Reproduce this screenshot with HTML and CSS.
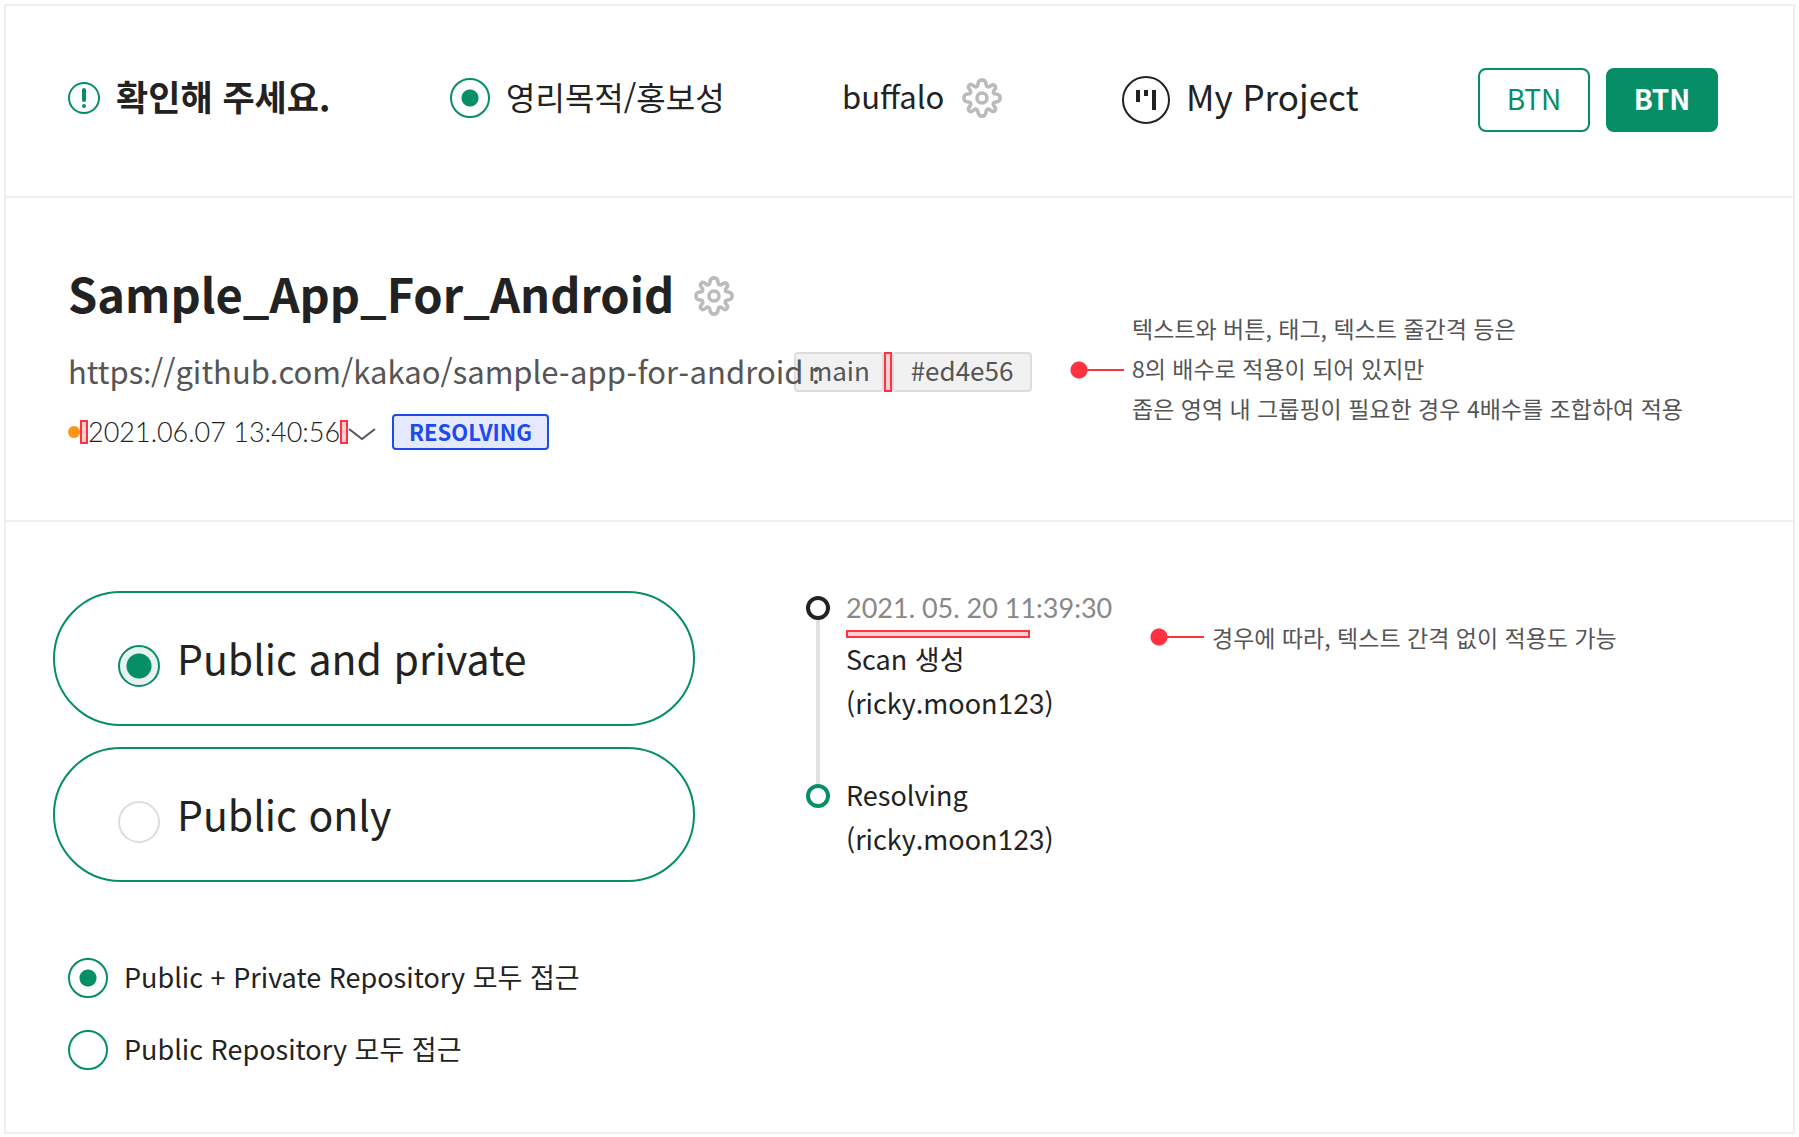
FILE: index.html
```html
<!DOCTYPE html>
<html lang="ko">
<head>
<meta charset="utf-8">
<meta name="viewport" content="width=device-width, initial-scale=1">
<title>Spacing guide</title>
<link rel="stylesheet" href="styles.css">
</head>
<body>
<svg class="defs" aria-hidden="true">
  <symbol id="gear" viewBox="0 0 40 40">
    <path d="M16 6 C16 0.500 24 0.500 24 6 C24.200 9 26 9.600 28 8.200 C32 5 35.500 8.500 32 12.500 C30.500 14 31 16 34 16 C39.500 16 39.500 24 34 24 C31 24 30.500 26 32 28 C35.500 32 32 35.500 28 32 C26 30.500 24.200 31 24 34 C24 39.500 16 39.500 16 34 C15.800 31 14 30.500 12 32 C8 35.500 4.500 32 8 28 C9.500 26 9 24 6 24 C0.500 24 0.500 16 6 16 C9 16 9.500 14 8 12 C4.500 8 8 4.500 12 8 C14 9.500 15.800 9 16 6 Z" fill="none" stroke="#bbb" stroke-width="3.600"/>
    <circle cx="20" cy="20" r="5" fill="none" stroke="#bbb" stroke-width="3.600"/>
  </symbol>
</svg>
<main class="frame">
  <header class="samples">
    <div class="sample">
      <svg class="icon-notice" viewBox="0 0 32 32" aria-hidden="true"><circle cx="16" cy="16" r="15" fill="none" stroke="#068e66" stroke-width="2"/><path d="M16 8V18" stroke="#068e66" stroke-width="4" stroke-linecap="round"/><circle cx="16" cy="24" r="2" fill="#068e66"/></svg>
      <strong class="sample-text notice">확인해 주세요.</strong>
    </div>
    <label class="sample"><input class="radio" type="radio" name="purpose" checked><span class="sample-text">영리목적/홍보성</span></label>
    <div class="sample sample-user"><span class="sample-text user">buffalo</span><svg class="gear"><use href="#gear"/></svg></div>
    <div class="sample sample-project">
      <svg class="icon-project" viewBox="0 0 48 48" aria-hidden="true"><circle cx="24" cy="24" r="23" fill="none" stroke="#222" stroke-width="2"/><path d="M16 14V26M24 14V20M32 14V34" stroke="#222" stroke-width="4"/></svg>
      <span class="project">My Project</span>
    </div>
    <div class="buttons"><button class="btn" type="button">BTN</button><button class="btn btn-primary" type="button">BTN</button></div>
  </header>

  <section class="detail">
    <div class="repo">
      <div class="title-row"><h1 class="title">Sample_App_For_Android</h1><svg class="gear"><use href="#gear"/></svg></div>
      <div class="url-row">
        <a class="url" href="https://github.com/kakao/sample-app-for-android">https<span class="latin">:</span>//github.com/kakao/sample<span class="latin">-</span>app<span class="latin">-</span>for<span class="latin">-</span>android <span class="latin">:</span></a>
        <span class="tag">main</span><i class="gap gap-tall"></i><span class="tag tag-wide">#ed4e56</span>
      </div>
      <div class="scan-row">
        <i class="status-dot"></i><i class="gap"></i><time class="date">2021.06.07 13:40:56</time><i class="gap"></i>
        <svg class="chevron" viewBox="0 0 28 24" aria-hidden="true"><path d="M1 9L14 19L27 9" fill="none" stroke="#555" stroke-width="2"/></svg>
        <span class="badge">RESOLVING</span>
      </div>
    </div>
    <div class="note note-first"><i class="pin"></i><p class="note-text">텍스트와 버튼, 태그, 텍스트 줄간격 등은<br>8의 배수로 적용이 되어 있지만<br>좁은 영역 내 그룹핑이 필요한 경우 4배수를 조합하여 적용</p></div>
  </section>

  <section class="access">
    <div class="choices">
      <label class="pill"><input class="pill-radio" type="radio" name="scope" checked><span class="pill-text">Public and private</span></label>
      <label class="pill"><input class="pill-radio" type="radio" name="scope"><span class="pill-text">Public only</span></label>
      <label class="option option-first"><input class="radio" type="radio" name="repo" checked><span class="option-text">Public + Private Repository 모두 접근</span></label>
      <label class="option"><input class="radio" type="radio" name="repo"><span class="option-text">Public Repository 모두 접근</span></label>
    </div>
    <ol class="timeline">
      <li class="event event-linked"><i class="node"></i><div><time class="event-date">2021. 05. 20 11:39:30</time><i class="gap gap-wide"></i><p class="event-text event-first">Scan 생성<br>(ricky.moon<span class="latin">123</span>)</p></div></li>
      <li class="event"><i class="node node-green"></i><p class="event-text event-last">Resolving<br>(ricky.moon<span class="latin">123</span>)</p></li>
    </ol>
    <div class="note note-second"><i class="pin"></i><p class="note-text">경우에 따라, 텍스트 간격 없이 적용도 가능</p></div>
  </section>
</main>
</body>
</html>
```
FILE: styles.css
```css
* { box-sizing: border-box; }
body {
  margin: 4px 4px 3px;
  background: #fff;
  color: #222;
  font: 27px/40px "Noto Sans CJK KR", sans-serif;
}
h1, p, ol { margin: 0; padding: 0; }
i, svg { display: block; flex: none; }
.defs { position: absolute; width: 0; height: 0; }
.frame { border: 2px solid #eee; }

.samples {
  display: grid;
  grid-template-columns: 382fr 392fr 280fr 356fr 315fr;
  align-items: center;
  padding: 62px 0 64px 62px;
  border-bottom: 2px solid #eee;
}
.sample { display: flex; align-items: center; gap: 16px; padding-bottom: 4px; font-size: 32px; white-space: nowrap; }
.sample-user { gap: 18px; }
.sample-text { padding-bottom: 4px; }
.user { font-size: 31px; }
.notice, .project { font-size: 35px; }
.sample-project { padding-bottom: 0; }
.project { padding-bottom: 8px; }
.icon-notice { width: 32px; height: 32px; }
.icon-project { width: 48px; height: 48px; }
.gear { width: 40px; height: 40px; }
.buttons { display: flex; gap: 16px; }
.btn {
  width: 112px;
  height: 64px;
  padding: 0 0 4px;
  border: 2px solid #068e66;
  border-radius: 8px;
  background: #fff;
  color: #068e66;
  font: 28px/40px "Noto Sans CJK KR", sans-serif;
}
.btn-primary { background: #068e66; color: #fff; font-weight: 700; }

.radio, .pill-radio { flex: none; appearance: none; margin: 0; border-radius: 50%; }
.radio { width: 40px; height: 40px; border: 2px solid #068e66; }
.radio:checked { background: radial-gradient(circle, #068e66 8px, #fff 9px); }
.pill-radio { width: 42px; height: 42px; border: 2px solid #ddd; }
.pill-radio:checked { border-color: #068e66; background: radial-gradient(circle, #068e66 12px, #e6f3f0 13px); }

.detail {
  display: grid;
  grid-template-columns: 1002px 1fr;
  padding: 72px 0 70px 62px;
  border-bottom: 2px solid #eee;
}
.title-row { display: flex; align-items: flex-end; gap: 20px; }
.title { font-size: 47px; line-height: 46px; }
.url-row { display: flex; margin-top: 36px; }
.url {
  position: relative;
  z-index: 1;
  width: 726px;
  color: #555;
  font-size: 31px;
  line-height: 38px;
  text-decoration: none;
  white-space: nowrap;
}
.tag {
  height: 40px;
  width: 90px;
  border: 2px solid #ddd;
  border-radius: 4px;
  background: #f1f1f1;
  color: #555;
  font-size: 26px;
  line-height: 32px;
  text-align: center;
}
.tag-wide { width: 140px; }
.gap { width: 8px; height: 24px; border: 2px solid #ff323f; background: #ffd0d3; }
.gap-tall { height: 40px; }
.gap-wide { width: 184px; height: 8px; }
.scan-row { display: flex; align-items: center; margin-top: 22px; }
.status-dot { width: 12px; height: 12px; border-radius: 50%; background: #ff9518; }
.date { width: 252px; font-family: Lato, sans-serif; font-size: 27px; font-weight: 300; line-height: 36px; white-space: nowrap; }
.chevron { width: 28px; height: 24px; }
.badge {
  height: 36px;
  margin-left: 16px;
  padding: 0 15px;
  border: 2px solid #1f49e8;
  border-radius: 4px;
  background: #e5e9ff;
  color: #1f49e8;
  font-size: 22px;
  font-weight: 700;
  line-height: 30px;
}

.note { display: flex; align-items: center; gap: 8px; color: #555; font-size: 23px; white-space: nowrap; }
.note-first { align-self: center; padding-top: 20px; }
.note-first .note-text { padding-bottom: 4px; }
.pin {
  width: 54px;
  height: 18px;
  background:
    linear-gradient(#ff323f, #ff323f) 9px 8px / 45px 2px no-repeat,
    radial-gradient(circle at 9px 9px, #ff323f 8px, transparent 9px);
}

.access {
  display: grid;
  grid-template-columns: 753px 344px 1fr;
  align-items: start;
  padding: 69px 0 62px 47px;
}
.choices { display: flex; flex-direction: column; align-items: flex-start; }
.pill {
  display: flex;
  align-items: flex-end;
  gap: 17px;
  width: 642px;
  height: 135px;
  margin-bottom: 21px;
  padding: 0 0 37px 63px;
  border: 2px solid #068e66;
  border-radius: 68px;
  font-size: 41px;
  line-height: 56px;
}
.pill-text { padding-bottom: 2px; }
.option { display: flex; align-items: center; gap: 16px; margin: 0 0 32px 15px; }
.option-text { height: 40px; line-height: 38px; }
.option-first { margin-top: 55px; }
.option:last-child { margin-bottom: 0; }

.timeline { list-style: none; padding-top: 5px; }
.event { display: flex; align-items: flex-start; gap: 16px; }
.node { width: 24px; height: 24px; border: 4px solid #222; border-radius: 50%; background: #fff; }
.node-green { border-color: #068e66; }
.event-linked { height: 188px; background: linear-gradient(#e1e1e1, #e1e1e1) 10px 24px / 4px 100% no-repeat; }
.event-date { display: block; margin-bottom: 10px; color: #888; font-family: Lato, sans-serif; line-height: 24px; white-space: nowrap; }
.event-text { line-height: 44px; }
.event-first { margin-top: -1px; }
.event-last { margin-top: -11px; }
.latin { font-family: Lato, sans-serif; }
.note-second { padding-top: 26px; }
```
